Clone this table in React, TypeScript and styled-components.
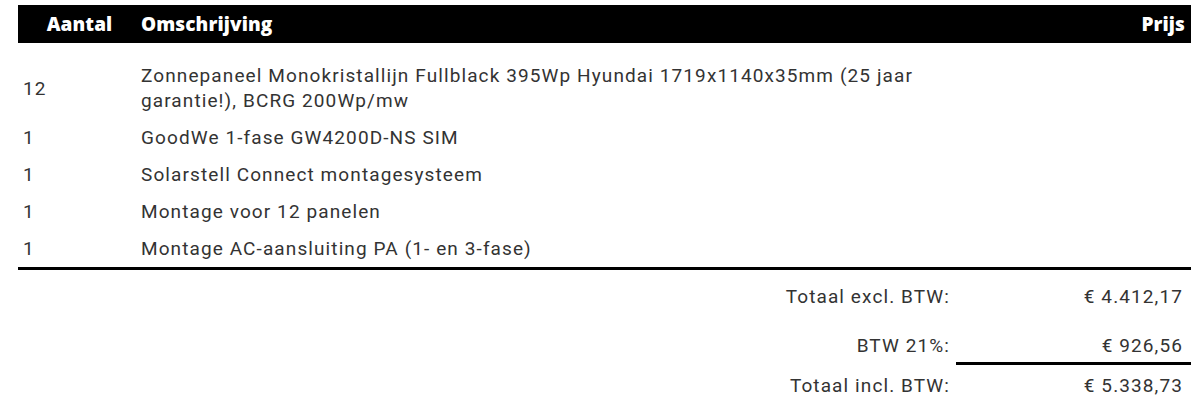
import React from "react";
import styled, { createGlobalStyle } from "styled-components";

const GlobalStyle = createGlobalStyle`
  body {
    margin: 0;
    background: #ffffff;
    font-family: Roboto, "Liberation Sans", sans-serif;
    color: #333333;
  }
`;

const Page = styled.div`
  padding: 5px 13px 0 18px;
`;

const Head = styled.div`
  display: grid;
  grid-template-columns: 123px 1fr auto;
  align-items: center;
  height: 38px;
  background: #000000;
  color: #ffffff;
  font-family: "Open Sans", Roboto, sans-serif;
  font-weight: 800;
  font-size: 19px;
  letter-spacing: 0.1px;
`;

const HeadCell = styled.div<{ $align?: "left" | "center" | "right" }>`
  text-align: ${(p) => p.$align || "left"};
  padding-right: ${(p) => (p.$align === "right" ? "6px" : "0")};
`;

const Body = styled.div`
  padding-top: 14px;
  border-bottom: 3px solid #000000;
`;

const Row = styled.div`
  display: grid;
  grid-template-columns: 123px 800px 1fr;
  align-items: center;
  padding: 6px 0;
  font-size: 19px;
  line-height: 25px;
  letter-spacing: 1.1px;
`;

const Qty = styled.div`
  padding-left: 5px;
`;

const Totals = styled.div`
  display: grid;
  grid-template-columns: auto 235px;
  justify-content: end;
  font-size: 19px;
  line-height: 25px;
  letter-spacing: 1.1px;
  padding-top: 3px;
`;

type CellProps = { $line?: boolean; $afterLine?: boolean };

const Label = styled.div<CellProps>`
  text-align: right;
  padding: ${(p) => (p.$afterLine ? "8px" : "11px")} 6px ${(p) => (p.$line ? "4px" : "13px")} 0;
  border-bottom: ${(p) => (p.$line ? "3px solid transparent" : "none")};
`;

const Value = styled(Label)`
  padding-right: 8px;
  border-bottom: ${(p) => (p.$line ? "3px solid #000000" : "none")};
`;

const items = [
  {
    qty: "12",
    text: "Zonnepaneel Monokristallijn Fullblack 395Wp Hyundai 1719x1140x35mm (25 jaar garantie!), BCRG 200Wp/mw",
  },
  { qty: "1", text: "GoodWe 1-fase GW4200D-NS SIM" },
  { qty: "1", text: "Solarstell Connect montagesysteem" },
  { qty: "1", text: "Montage voor 12 panelen" },
  { qty: "1", text: "Montage AC-aansluiting PA (1- en 3-fase)" },
];

const totals = [
  { label: "Totaal excl. BTW:", value: "€ 4.412,17" },
  { label: "BTW 21%:", value: "€ 926,56", line: true },
  { label: "Totaal incl. BTW:", value: "€ 5.338,73", afterLine: true },
];

export default function App() {
  return (
    <>
      <GlobalStyle />
      <Page>
        <Head>
          <HeadCell $align="center">Aantal</HeadCell>
          <HeadCell>Omschrijving</HeadCell>
          <HeadCell $align="right">Prijs</HeadCell>
        </Head>
        <Body>
          {items.map((it, i) => (
            <Row key={i}>
              <Qty>{it.qty}</Qty>
              <div>{it.text}</div>
              <div />
            </Row>
          ))}
        </Body>
        <Totals>
          {totals.map((t) => (
            <React.Fragment key={t.label}>
              <Label $line={t.line} $afterLine={t.afterLine}>{t.label}</Label>
              <Value $line={t.line} $afterLine={t.afterLine}>{t.value}</Value>
            </React.Fragment>
          ))}
        </Totals>
      </Page>
    </>
  );
}
